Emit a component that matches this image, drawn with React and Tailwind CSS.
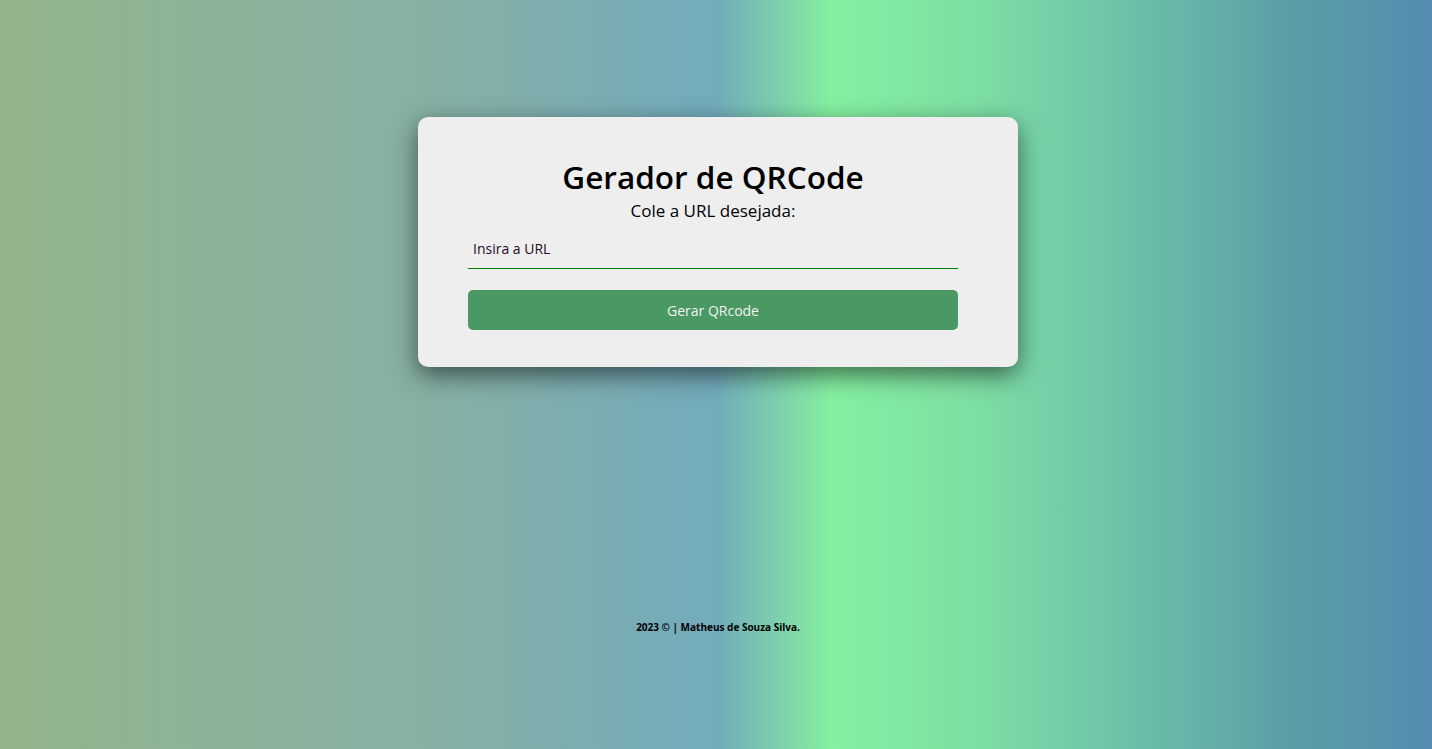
export default function App() {
  return (
    <div
      className="min-h-[749px] w-full flex flex-col items-center pt-[117px] pl-[4px] bg-[linear-gradient(90deg,#93b48b_0%,#86b0a4_30%,#72abbb_50%,#85f0a0_58%,#7ddfa4_68%,#66b7a9_82%,#5b9ea6_90%,#558bb0_100%)]"
      style={{ fontFamily: '"Open Sans", "Liberation Sans", sans-serif' }}
    >
      <div className="w-[600px] h-[250px] rounded-[10px] bg-[#eeeeee] shadow-[0_8px_25px_rgba(0,0,0,0.55)] pl-[50px] pr-[60px] pt-[40px] flex flex-col items-center">
        <h1 className="text-[31.5px] leading-[40px] font-semibold text-black">Gerador de QRCode</h1>
        <p className="text-[17px] leading-[22px] text-black mt-[3px]">Cole a URL desejada:</p>
        <input
          type="text"
          placeholder="Insira a URL"
          className="w-full h-[40px] mt-[7px] px-[5px] bg-transparent border-b border-[#008000] text-[14px] text-black placeholder:text-[#2a0a2a] outline-none"
        />
        <button className="w-full h-[40px] mt-[21px] rounded-[5px] bg-[#4a9863] text-[14px] text-[#f2f2f2]">
          Gerar QRcode
        </button>
      </div>
      <footer className="mt-[253px] text-[10px] font-bold text-black">
        2023 © | Matheus de Souza Silva.
      </footer>
    </div>
  )
}
